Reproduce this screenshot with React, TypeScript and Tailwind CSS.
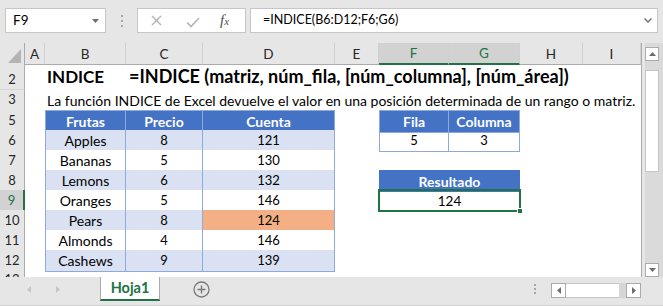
const COLS =
  "grid grid-cols-[25px_20px_81px_77px_132px_44px_70px_71px_63px_58px]";

const fruits = [
  { name: "Apples", price: 8, count: 121 },
  { name: "Bananas", price: 5, count: 130 },
  { name: "Lemons", price: 6, count: 132 },
  { name: "Oranges", price: 5, count: 146 },
  { name: "Pears", price: 8, count: 124 },
  { name: "Almonds", price: 4, count: 146 },
  { name: "Cashews", price: 9, count: 139 },
];

const RowHead = ({ n, sel, tall }: { n: number; sel?: boolean; tall?: boolean }) => {
  return (
    <div
      className={
        "flex justify-center border-b border-b-[#d4d4d4] text-[13px] " +
        (tall ? "items-end leading-[20px] " : "items-center ") +
        (sel
          ? "bg-[#d2d2d2] border-r-2 border-r-[#217346] text-[#217346]"
          : "bg-[#e6e6e6] border-r border-r-[#ababab] text-[#262626]")
      }
    >
      {n}
    </div>
  );
};

const ColHead = ({ label, sel }: { label: string; sel?: boolean }) => {
  return (
    <div
      className={
        "flex items-center justify-center border-r border-r-[#d0d0d0] text-[13.5px] " +
        (sel
          ? "bg-[#d2d2d2] border-b-2 border-b-[#217346] text-[#217346]"
          : "bg-[#e6e6e6] border-b border-b-[#ababab] text-[#262626]")
      }
    >
      {label}
    </div>
  );
};

const td = "flex items-center justify-center border-r border-b border-[#8ea9db]";
const th = td + " bg-[#4472c4] text-white font-bold";

export default function App() {
  return (
    <div className="w-[663px] h-[306px] overflow-hidden bg-[#e6e6e6] font-['Lato',sans-serif] text-[14px] text-black flex flex-col">
      {/* Formula bar */}
      <div className="h-[43px] flex items-start pt-[8px]">
        <div className="ml-[5px] w-[101px] h-[25px] bg-white border border-[#c6c6c6] flex items-center justify-between pl-[7px] pr-[6px]">
          <span className="text-[13.5px]">F9</span>
          <svg width="7" height="4" viewBox="0 0 7 4">
            <path d="M0 0h7L3.5 4z" fill="#6d6d6d" />
          </svg>
        </div>
        <div className="w-[31px] h-[25px] flex flex-col items-center justify-center gap-[3px]">
          <span className="w-[2px] h-[2px] bg-[#a6a6a6]"></span>
          <span className="w-[2px] h-[2px] bg-[#a6a6a6]"></span>
          <span className="w-[2px] h-[2px] bg-[#a6a6a6]"></span>
        </div>
        <div className="w-[109px] h-[25px] bg-white border border-[#c6c6c6] flex items-center pl-[13px]">
          <svg width="11" height="11" viewBox="0 0 11 11">
            <path d="M1 1l9 9M10 1l-9 9" stroke="#b4b4b4" strokeWidth="1.4" />
          </svg>
          <svg className="ml-[24px] mt-[3px]" width="14" height="11" viewBox="0 0 14 11">
            <path d="M1 5.5l4 4L13 1" stroke="#b4b4b4" strokeWidth="1.6" fill="none" />
          </svg>
          <span className="ml-[20px] font-['Liberation_Serif',serif] italic text-[15px] text-[#505050] leading-none">
            f<span className="text-[11px]">x</span>
          </span>
        </div>
        <div className="ml-[4px] w-[408px] h-[25px] bg-white border border-[#c6c6c6] flex items-center justify-between pl-[12px] pr-[5px]">
          <span className="text-[12.5px]">=INDICE(B6:D12;F6;G6)</span>
          <svg width="8" height="5" viewBox="0 0 8 5">
            <path d="M0.5 0.5l3.5 3.5 3.5-3.5" stroke="#6d6d6d" strokeWidth="1.3" fill="none" />
          </svg>
        </div>
      </div>

      {/* Sheet + vertical scroll */}
      <div className="h-[234px] flex">
        <div className="w-[642px] h-full overflow-hidden bg-white border-r border-r-[#ababab]">
          <div className={COLS + " h-[20px]"}>
            <div className="bg-[#e6e6e6] border-r border-r-[#ababab] border-b border-b-[#ababab] flex items-end justify-end pr-[3px] pb-[1px]">
              <svg width="13" height="14" viewBox="0 0 13 14">
                <path d="M13 0V14H0z" fill="#b4b4b4" />
              </svg>
            </div>
            {["A", "B", "C", "D", "E"].map((c) => (
              <ColHead key={c} label={c} />
            ))}
            <ColHead label="F" sel />
            <ColHead label="G" sel />
            <ColHead label="H" />
            <ColHead label="I" />
          </div>

          {/* Row 2 */}
          <div className={COLS + " h-[27px]"}>
            <RowHead n={2} tall />
            <div></div>
            <div className="flex items-center pl-[2px] font-bold text-[17px] whitespace-nowrap">INDICE</div>
            <div className="col-span-7 flex items-center pl-[3px] font-bold text-[18px] whitespace-nowrap">
              =INDICE (matriz, núm_fila, [núm_columna], [núm_área])
            </div>
          </div>

          {/* Row 3 */}
          <div className={COLS + " h-[20px]"}>
            <RowHead n={3} />
            <div></div>
            <div className="col-span-8 flex items-center pl-[2px] whitespace-nowrap">
              La función INDICE de Excel devuelve el valor en una posición determinada de un rango o matriz.
            </div>
          </div>

          {/* Row 5 */}
          <div className={COLS + " h-[20px]"}>
            <RowHead n={5} />
            <div></div>
            <div className={th + " border-t border-l"}>Frutas</div>
            <div className={th + " border-t"}>Precio</div>
            <div className={th + " border-t"}>Cuenta</div>
            <div></div>
            <div className={th + " border-t border-l"}>Fila</div>
            <div className={th + " border-t"}>Columna</div>
            <div></div>
            <div></div>
          </div>

          {fruits.map((f, i) => {
            const row = i + 6;
            const band = i % 2 === 0 ? "bg-[#d9e1f2]" : "bg-white";
            return (
              <div key={f.name} className={COLS + " h-[20px]"}>
                <RowHead n={row} sel={row === 9} />
                <div></div>
                <div className={td + " border-l " + band}>{f.name}</div>
                <div className={td + " text-[13px] " + band}>{f.price}</div>
                <div className={td + " text-[13px] " + (row === 10 ? "bg-[#f4b084]" : band)}>{f.count}</div>
                <div></div>
                {row === 6 && (
                  <>
                    <div className={td + " border-l text-[13px]"}>5</div>
                    <div className={td + " text-[13px]"}>3</div>
                  </>
                )}
                {row === 8 && (
                  <div className="col-span-2 flex items-center justify-center bg-[#4472c4] text-white font-bold">
                    Resultado
                  </div>
                )}
                {row === 9 && (
                  <div className="col-span-2 relative flex items-center justify-center text-[13.5px]">
                    124
                    <div className="absolute -left-[1px] -top-[1px] -right-[1px] bottom-0 border-2 border-[#217346]"></div>
                    <div className="absolute -right-[3px] -bottom-[2px] w-[6px] h-[6px] bg-[#217346] border border-white"></div>
                  </div>
                )}
                {row !== 6 && row !== 8 && row !== 9 && (
                  <>
                    <div></div>
                    <div></div>
                  </>
                )}
                <div></div>
                <div></div>
              </div>
            );
          })}

          {/* Row 13 (cut off by the sheet's edge, as in Excel) */}
          <div className={COLS + " h-[20px]"}>
            <RowHead n={13} />
          </div>
        </div>

        <div className="w-[21px] h-full pl-[3px]">
          <div className="h-full bg-[#dadada] flex flex-col">
            <div className="mt-[4px] w-[14px] h-[14px] bg-white border border-[#ababab] flex items-center justify-center">
              <svg width="7" height="4" viewBox="0 0 7 4">
                <path d="M3.5 0L7 4H0z" fill="#6d6d6d" />
              </svg>
            </div>
            <div className="mt-[9px] w-[14px] h-[102px] bg-white border border-[#c6c6c6]"></div>
            <div className="flex-1"></div>
            <div className="w-[14px] h-[14px] bg-white border border-[#ababab] flex items-center justify-center">
              <svg width="7" height="4" viewBox="0 0 7 4">
                <path d="M0 0h7L3.5 4z" fill="#6d6d6d" />
              </svg>
            </div>
          </div>
        </div>
      </div>

      {/* Sheet tabs */}
      <div className="h-[29px] flex items-start border-b border-b-[#d0d0d0]">
        <div className="w-[100px] h-[24px] flex items-center">
          <svg className="ml-[27px]" width="4" height="7" viewBox="0 0 4 7">
            <path d="M4 0v7L0 3.5z" fill="#c6c6c6" />
          </svg>
          <svg className="ml-[25px]" width="4" height="7" viewBox="0 0 4 7">
            <path d="M0 0v7l4-3.5z" fill="#c6c6c6" />
          </svg>
        </div>
        <div className="w-[60px] h-[24px] bg-white border-x border-[#ababab] border-b-2 border-b-[#217346] flex items-center justify-center font-bold text-[14.5px] text-[#217346]">
          Hoja1
        </div>
        <div className="w-[80px] h-[24px] flex items-center pl-[33px]">
          <svg width="17" height="17" viewBox="0 0 17 17">
            <circle cx="8.5" cy="8.5" r="7.5" stroke="#7a7a7a" strokeWidth="1.3" fill="none" />
            <path d="M8.5 4.5v8M4.5 8.5h8" stroke="#7a7a7a" strokeWidth="1.4" />
          </svg>
        </div>
        <div className="flex-1"></div>
        <div className="h-[24px] flex flex-col items-center justify-center gap-[2px] mr-[15px]">
          <span className="w-[2px] h-[2px] bg-[#a6a6a6]"></span>
          <span className="w-[2px] h-[2px] bg-[#a6a6a6]"></span>
          <span className="w-[2px] h-[2px] bg-[#a6a6a6]"></span>
        </div>
        <div className="mt-[6px] w-[90px] h-[15px] flex bg-[#d6d6d6] mr-[22px]">
          <div className="w-[15px] h-full bg-white border border-[#ababab] flex items-center justify-center">
            <svg width="4" height="7" viewBox="0 0 4 7">
              <path d="M4 0v7L0 3.5z" fill="#6d6d6d" />
            </svg>
          </div>
          <div className="w-[53px] h-full bg-white border-y border-[#c6c6c6]"></div>
          <div className="flex-1"></div>
          <div className="w-[15px] h-full bg-white border border-[#ababab] flex items-center justify-center">
            <svg width="4" height="7" viewBox="0 0 4 7">
              <path d="M0 0v7l4-3.5z" fill="#6d6d6d" />
            </svg>
          </div>
        </div>
      </div>
    </div>
  );
}
